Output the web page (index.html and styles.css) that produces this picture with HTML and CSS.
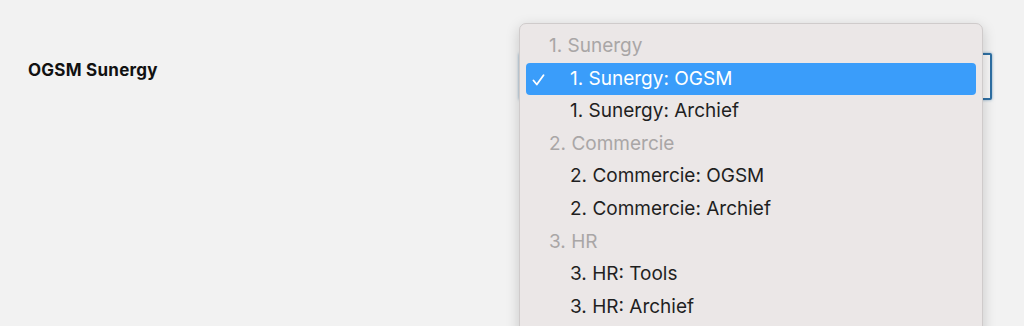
FILE: index.html
```html
<!DOCTYPE html>
<html lang="nl">
<head>
  <meta charset="UTF-8" />
  <title>OGSM Sunergy</title>
  <link rel="stylesheet" href="styles.css">
</head>
<body>
  <div class="field-row">
    <label class="field-label">OGSM Sunergy</label>
    <div class="select-wrap">
      <div class="select-box"></div>

      <div class="dropdown">
        <div class="group">1. Sunergy</div>
        <div class="option selected">
          <svg class="check" width="13" height="12" viewBox="0 0 13 12">
            <polyline points="1.5,6.5 4.8,10.5 11.5,1.2" fill="none" stroke="#fff" stroke-width="1.8" stroke-linecap="round" stroke-linejoin="round"/>
          </svg>
          1. Sunergy: OGSM
        </div>
        <div class="option">1. Sunergy: Archief</div>
        <div class="group">2. Commercie</div>
        <div class="option">2. Commercie: OGSM</div>
        <div class="option">2. Commercie: Archief</div>
        <div class="group">3. HR</div>
        <div class="option">3. HR: Tools</div>
        <div class="option">3. HR: Archief</div>
      </div>
    </div>
  </div>
</body>
</html>
```

FILE: styles.css
```css
* {
  margin: 0;
  padding: 0;
  box-sizing: border-box;
}

html, body {
  height: 100%;
  background-color: #f2f2f2;
  font-family: 'Inter', 'Noto Sans', sans-serif;
  color: #1d1d1d;
  overflow: hidden;
}

.field-row {
  display: flex;
  align-items: center;
  padding: 53px 32px 0 28px;
}

.field-label {
  font-size: 17px;
  font-weight: 700;
  letter-spacing: 0.25px;
  color: #111;
  width: 491px;
  margin-top: -14px;
}

.select-wrap {
  position: relative;
  flex: 1;
}

.select-box {
  height: 47px;
  background: #f7f6f6;
  border: 2px solid #2e6fa3;
  border-radius: 2px;
  box-shadow: 0 0 3px rgba(46, 111, 163, 0.6);
}

.dropdown {
  position: absolute;
  top: -30px;
  left: 0;
  width: 464px;
  height: 340px;
  background: #ebe7e7;
  border: 1px solid #cfcbcb;
  border-radius: 7px;
  box-shadow: 0 4px 14px rgba(0, 0, 0, 0.18);
  padding: 6px 6px;
  font-size: 19px;
  line-height: 32.6px;
}

.group {
  color: #a9a6a6;
  padding-left: 23px;
}

.option {
  position: relative;
  padding-left: 44px;
  color: #1f1f1f;
  border-radius: 4px;
}

.option.selected {
  background: #3a9dfa;
  color: #fff;
}

.check {
  position: absolute;
  left: 6px;
  top: 11px;
}
```
